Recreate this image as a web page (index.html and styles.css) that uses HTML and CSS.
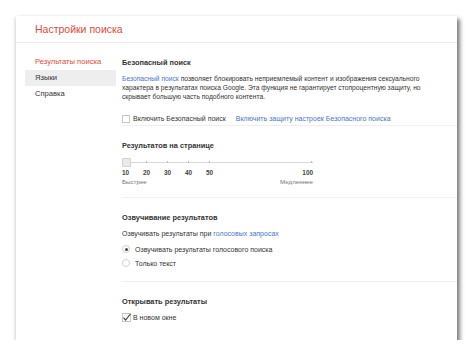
FILE: index.html
```html
<!DOCTYPE html>
<html lang="ru">
<head>
<meta charset="utf-8">
<title>Настройки поиска</title>
<link rel="stylesheet" href="styles.css">
</head>
<body>
<div class="card">
  <div class="header"><h1 class="title">Настройки поиска</h1></div>
  <div class="layout">
    <nav class="sidebar">
      <div class="nav-item active">Результаты поиска</div>
      <div class="nav-item hover">Языки</div>
      <div class="nav-item">Справка</div>
    </nav>
    <main class="main">
      <section class="section s1">
        <h2 class="heading">Безопасный поиск</h2>
        <p class="para"><span class="link">Безопасный поиск</span> позволяет блокировать неприемлемый контент и изображения сексуального характера в результатах поиска Google. Эта функция не гарантирует стопроцентную защиту, но скрывает большую часть подобного контента.</p>
        <div class="check-row">
          <span class="checkbox"></span>
          <span class="check-label">Включить Безопасный поиск</span>
          <span class="link lock-link">Включить защиту настроек Безопасного поиска</span>
        </div>
      </section>
      <section class="section s2">
        <h2 class="heading">Результатов на странице</h2>
        <div class="slider">
          <div class="track"></div>
          <span class="tick" style="left:21px"></span>
          <span class="tick" style="left:42px"></span>
          <span class="tick" style="left:63px"></span>
          <span class="tick" style="left:84px"></span>
          <span class="tick" style="left:186px"></span>
          <span class="thumb"></span>
        </div>
        <div class="ticks">
          <span class="num">10</span>
          <span class="num">20</span>
          <span class="num">30</span>
          <span class="num">40</span>
          <span class="num">50</span>
          <span class="num n100">100</span>
        </div>
        <div class="speed">
          <span>Быстрее</span>
          <span>Медленнее</span>
        </div>
      </section>
      <section class="section s3">
        <h2 class="heading">Озвучивание результатов</h2>
        <p class="line">Озвучивать результаты при <span class="link">голосовых запросах</span></p>
        <div class="radio-row first"><span class="radio on"></span><span>Озвучивать результаты голосового поиска</span></div>
        <div class="radio-row"><span class="radio"></span><span>Только текст</span></div>
      </section>
      <section class="section s4">
        <h2 class="heading">Открывать результаты</h2>
        <div class="newwin">
          <svg class="tick-icon" width="9" height="9" viewBox="0 0 9 9"><rect x="0.5" y="0.5" width="8" height="8" fill="#fff" stroke="#c6c6c6"/><path d="M1.5 4.6 L3.6 7 L8.4 1" fill="none" stroke="#444" stroke-width="1.2"/></svg>
          <span>В новом окне</span>
        </div>
      </section>
    </main>
  </div>
</div>
</body>
</html>
```
FILE: styles.css
```css
* { box-sizing: border-box; }
html, body { margin: 0; padding: 0; background: #fff; }
body {
  font-family: "Liberation Sans", Arial, sans-serif;
  color: #333;
  font-size: 7px;
  line-height: 9px;
}
.card {
  margin: 16px 0 0 16px;
  width: 441px;
  height: 324px;
  background: #fff;
  box-shadow: 3px 3px 4px rgba(0,0,0,0.5), -1px 1px 3px rgba(0,0,0,0.15);
  display: flex;
  flex-direction: column;
}
.header {
  height: 27px;
  border-bottom: 1px solid #ececec;
  padding-left: 19px;
  display: flex;
  align-items: center;
}
.title {
  margin: 0;
  font-size: 10.5px;
  font-weight: normal;
  color: #dd4b39;
  line-height: 14px;
}
.layout { display: flex; flex: 1; }
.sidebar {
  width: 106px;
  padding-top: 11px;
  padding-left: 9px;
  font-size: 7.6px;
}
.nav-item {
  height: 16px;
  line-height: 16px;
  padding-left: 10px;
  color: #333;
}
.nav-item.active { color: #dd4b39; }
.nav-item.hover { background: #eeeeee; width: 91px; }
.main {
  flex: 1;
  padding-top: 15px;
}
.section { border-bottom: 1px solid #efefef; padding-right: 20px; }
.heading {
  margin: 0;
  font-size: 7.4px;
  font-weight: bold;
  color: #333;
  line-height: 9px;
}
.link { color: #4a74c9; }
.para { margin: 7px 0 0 0; line-height: 9px; font-size: 6.7px; max-width: 315px; }
.check-row { display: flex; align-items: center; margin-top: 13px; height: 9px; }
.checkbox { width: 8px; height: 8px; border: 1px solid #c6c6c6; margin-right: 3px; background: #fff; }
.lock-link { margin-left: 10px; }
.s1 { padding-bottom: 2px; }
.s2 { padding-top: 15px; padding-bottom: 11px; }
.slider { position: relative; height: 10px; width: 191px; margin-top: 8px; }
.track { position: absolute; left: 3px; right: 0; top: 4px; height: 1px; background: #d8d8d8; }
.tick { position: absolute; top: 3px; width: 1px; height: 2px; background: #bbb; margin-left: 3px; }
.thumb { position: absolute; left: 0; top: 0; width: 9px; height: 9px; background: #eaeaea; border: 1px solid #d2d2d2; border-radius: 1px; }
.ticks { display: flex; width: 191px; margin-top: 0; height: 9px; }
.num { width: 21px; font-size: 6.4px; font-weight: bold; color: #444; }
.n100 { margin-left: auto; width: auto; }
.speed { display: flex; justify-content: space-between; width: 191px; font-size: 6.2px; color: #777; }
.s3 { padding-top: 15px; padding-bottom: 11px; }
.line { margin: 7px 0 0 0; }
.radio-row { display: flex; align-items: center; height: 14px; }
.radio-row.first { margin-top: 4px; }
.radio { width: 8px; height: 8px; border-radius: 50%; border: 1px solid #d0d0d0; margin-right: 5px; position: relative; background: #fff; }
.radio.on::after { content: ""; position: absolute; left: 1.5px; top: 1.5px; width: 3px; height: 3px; border-radius: 50%; background: #444; }
.s4 { padding-top: 15px; border-bottom: none; }
.newwin { display: flex; align-items: center; margin-top: 7px; height: 9px; }
.tick-icon { margin-right: 2px; }
```
